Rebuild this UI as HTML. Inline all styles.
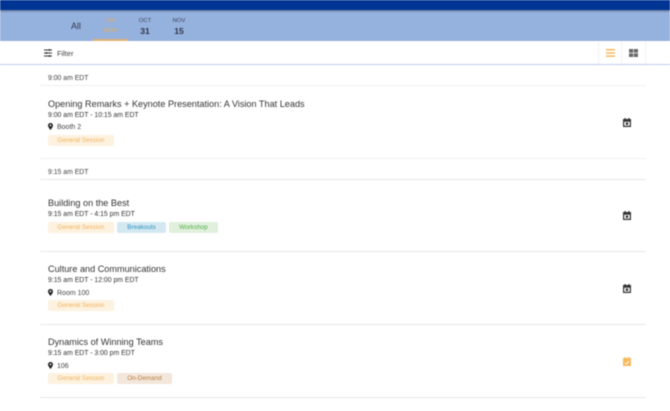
<!DOCTYPE html>
<html><head><meta charset="utf-8"><style>
html,body{margin:0;padding:0;width:670px;height:411px;overflow:hidden;background:#fff}
#r{position:relative;width:670px;height:411px;overflow:hidden;font-family:"Liberation Sans",sans-serif;filter:blur(.4px)}
#r div{position:absolute;white-space:nowrap}
.t{line-height:14px;color:#333;left:48px;font-size:9.15px}
.h{font-size:6.87px;line-height:12px;color:#333;left:48px;margin-top:1px}
.time{font-size:6.87px;line-height:12px;color:#444;left:48px;margin-top:1px}
.loc{font-size:7px;line-height:12px;color:#444;left:57px;margin-top:1px}
.tag{height:11px;line-height:11px;font-size:6.35px;text-align:center;border-radius:2px}
.g{background:#fdf1e0;color:#f0b45c;left:48px;width:66px}
.line{left:40px;width:606px;height:1px;background:#f0f0f0}
svg{position:absolute}
</style></head><body><div id="r">
<div style="left:0;top:0;width:670px;height:10px;background:#003594;box-shadow:0 1px 2px rgba(0,0,0,.4)"></div>
<div style="left:0;top:10px;width:670px;height:31px;background:#95b1de;z-index:-1"></div>
<div style="left:71px;top:19px;font-size:8.8px;line-height:14px;color:#2f3848">All</div>
<div style="left:97px;width:27px;top:17px;font-size:5.9px;line-height:9.5px;color:#e5ae5c;text-align:center;white-space:normal">ON<br>NOW</div>
<div style="left:93px;top:39px;width:35px;height:2px;background:#dfb176"></div>
<div style="left:130px;width:30px;top:17px;font-size:5.9px;line-height:9px;color:#3c4658;text-align:center">OCT</div>
<div style="left:130px;width:30px;top:25px;font-size:8.6px;line-height:13px;color:#2f3848;text-align:center;font-weight:bold">31</div>
<div style="left:164px;width:30px;top:17px;font-size:5.9px;line-height:9px;color:#3c4658;text-align:center">NOV</div>
<div style="left:164px;width:30px;top:25px;font-size:8.6px;line-height:13px;color:#2f3848;text-align:center;font-weight:bold">15</div>

<div style="left:0;top:64px;width:670px;height:1px;background:#bccde8"></div>
<svg style="left:44px;top:49px" width="8" height="8" viewBox="0 0 8 8"><path d="M0 0.500h8v1H0zM0 3.500h8v1H0zM0 6.500h8v1H0z" fill="#333"/><path d="M5 0h1v2H5zM2 3h1v2H2zM5 6h1v2H5z" fill="#333"/></svg>
<div style="left:57px;top:47px;font-size:7.4px;line-height:13px;color:#444">Filter</div>
<div style="left:598px;top:41px;width:1px;height:23px;background:#f4f4f4"></div>
<div style="left:621px;top:41px;width:1px;height:23px;background:#f4f4f4"></div>
<div style="left:645px;top:41px;width:1px;height:23px;background:#f4f4f4"></div>
<svg style="left:606px;top:49px" width="9" height="8"><path d="M0 0h9v1.500H0zM0 3.200h9v1.500H0zM0 6.400h9v1.500H0z" fill="#f5b95e"/></svg>
<svg style="left:629px;top:49px" width="9" height="8"><path d="M0 0h4.200v3.600H0zM4.800 0H9v3.600H4.800zM0 4.400h4.200V8H0zM4.800 4.400H9V8H4.800z" fill="#6a6a6a"/></svg>

<div class="time" style="top:72px">9:00 am EDT</div>
<div class="line" style="top:85px"></div>
<div class="t" style="top:97px">Opening Remarks + Keynote Presentation: A Vision That Leads</div>
<div class="h" style="top:109px">9:00 am EDT - 10:15 am EDT</div>
<svg style="left:48px;top:123px" width="5" height="7" viewBox="0 0 5 7"><path d="M2.500 0C1.100 0 0 1.100 0 2.500 0 4 2.500 7 2.500 7S5 4 5 2.500C5 1.100 3.900 0 2.500 0zm0 3.300a.9.900 0 110-1.800.9.900 0 010 1.800z" fill="#222" fill-rule="evenodd"/></svg>
<div class="loc" style="top:121px">Booth 2</div>
<div class="tag g" style="top:135px">General Session</div>
<div class="line" style="top:158px"></div>
<div class="time" style="top:166px">9:15 am EDT</div>
<div class="line" style="top:179px;background:#e8e8e8"></div>

<div class="t" style="top:196px">Building on the Best</div>
<div class="h" style="top:208px">9:15 am EDT - 4:15 pm EDT</div>
<div class="tag g" style="top:222px">General Session</div>
<div class="tag" style="top:222px;left:117px;width:49px;background:#d4e8f1;color:#2f92bd">Breakouts</div>
<div class="tag" style="top:222px;left:169px;width:49px;background:#e0f0dc;color:#55ad4a">Workshop</div>
<div class="line" style="top:251px;background:#e8e8e8"></div>

<div class="t" style="top:262px">Culture and Communications</div>
<div class="h" style="top:274px">9:15 am EDT - 12:00 pm EDT</div>
<svg style="left:48px;top:289px" width="5" height="7" viewBox="0 0 5 7"><path d="M2.500 0C1.100 0 0 1.100 0 2.500 0 4 2.500 7 2.500 7S5 4 5 2.500C5 1.100 3.900 0 2.500 0zm0 3.300a.9.900 0 110-1.800.9.900 0 010 1.800z" fill="#222" fill-rule="evenodd"/></svg>
<div class="loc" style="top:287px">Room 100</div>
<div class="tag g" style="top:300px">General Session</div>
<div class="line" style="top:324px;background:#e8e8e8"></div>

<div class="t" style="top:335px">Dynamics of Winning Teams</div>
<div class="h" style="top:347px">9:15 am EDT - 3:00 pm EDT</div>
<svg style="left:48px;top:362px" width="5" height="7" viewBox="0 0 5 7"><path d="M2.500 0C1.100 0 0 1.100 0 2.500 0 4 2.500 7 2.500 7S5 4 5 2.500C5 1.100 3.900 0 2.500 0zm0 3.300a.9.900 0 110-1.800.9.900 0 010 1.800z" fill="#222" fill-rule="evenodd"/></svg>
<div class="loc" style="top:360px">106</div>
<div class="tag g" style="top:373px">General Session</div>
<div class="tag" style="top:373px;left:117px;width:55px;background:#f3e6db;color:#b87f40">On-Demand</div>
<div class="line" style="top:397px;background:#e8e8e8"></div>

<svg style="left:623px;top:118px" width="8" height="9" viewBox="0 0 8 9"><path d="M1.500 0h1.200v1h2.600V0h1.200v1H8v8H0V1h1.500zM1.200 3.800v4h5.600v-4z" fill="#333" fill-rule="evenodd"/><path d="M2.800 4.500h2.400v2.400H2.800z" fill="#333"/></svg>
<svg style="left:623px;top:211px" width="8" height="9" viewBox="0 0 8 9"><path d="M1.500 0h1.200v1h2.600V0h1.200v1H8v8H0V1h1.500zM1.200 3.800v4h5.600v-4z" fill="#333" fill-rule="evenodd"/><path d="M2.800 4.500h2.400v2.400H2.800z" fill="#333"/></svg>
<svg style="left:623px;top:284px" width="8" height="9" viewBox="0 0 8 9"><path d="M1.500 0h1.200v1h2.600V0h1.200v1H8v8H0V1h1.500zM1.200 3.800v4h5.600v-4z" fill="#333" fill-rule="evenodd"/><path d="M2.800 4.500h2.400v2.400H2.800z" fill="#333"/></svg>
<svg style="left:623px;top:357px" width="8" height="9" viewBox="0 0 8 9"><path d="M1.500 0h1.200v1h2.600V0h1.200v1H8v8H0V1h1.500z" fill="#f5b95e"/><path d="M2 6l1.200 1L6 4.200" stroke="#fff" stroke-width=".9" fill="none"/></svg>
</div></body></html>
